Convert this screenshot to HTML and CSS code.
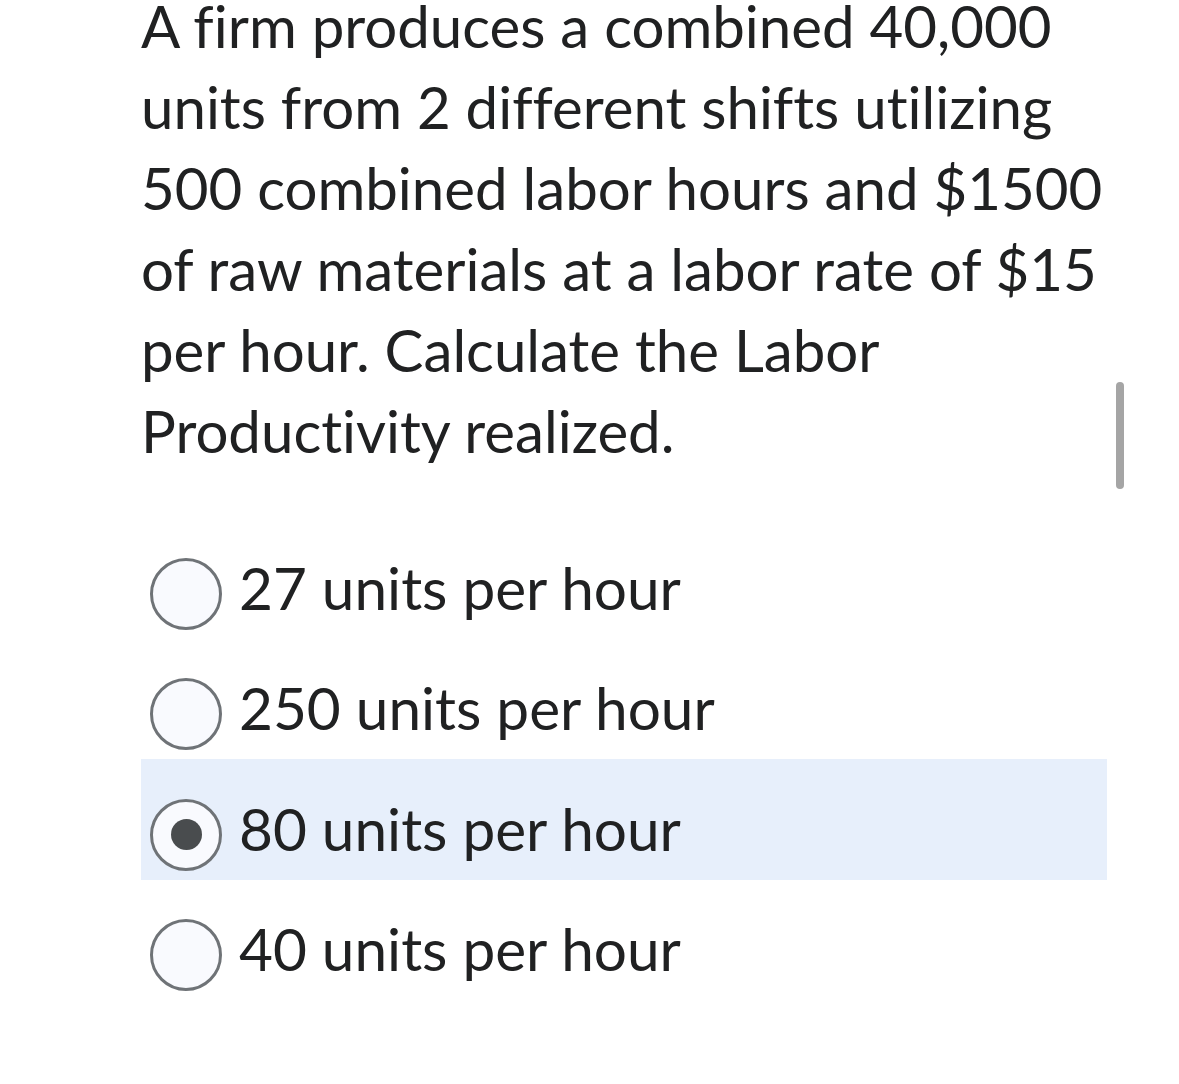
FILE: index.html
```html
<!DOCTYPE html>
<html>
<head>
<meta charset="utf-8">
<link rel="stylesheet" href="styles.css">
</head>
<body>
<div class="page">
  <p class="question">A firm produces a combined 40,000<br>units from 2 different shifts utilizing<br>500 combined labor hours and $1500<br>of raw materials at a labor rate of $15<br>per hour. Calculate the Labor<br>Productivity realized.</p>
  <div class="options">
    <div class="option"><span class="radio"></span><span class="label">27 units per hour</span></div>
    <div class="option"><span class="radio"></span><span class="label">250 units per hour</span></div>
    <div class="option selected"><span class="radio"><span class="dot"></span></span><span class="label">80 units per hour</span></div>
    <div class="option"><span class="radio"></span><span class="label">40 units per hour</span></div>
  </div>
</div>
<div class="scrollbar"></div>
</body>
</html>
```
FILE: styles.css
```css
html, body {
  margin: 0;
  padding: 0;
  background: #ffffff;
}
body {
  font-family: Lato, "Open Sans", sans-serif;
  color: #202122;
  overflow: hidden;
  height: 1084px;
  font-variant-ligatures: none;
  font-feature-settings: "liga" 0, "clig" 0;
}
.page {
  width: 966px;
  margin-left: 141px;
}
.question {
  margin: -15px 0 0 0;
  font-size: 58.2px;
  line-height: 81px;
  padding-left: 0;
  white-space: nowrap;
}
.options {
  margin-top: 48px;
  display: flex;
  flex-direction: column;
}
.option {
  display: flex;
  align-items: center;
  height: 120px;
  box-sizing: border-box;
  padding: 32px 0 16px 9px;
}
.option.selected {
  background: #e7effb;
  height: 121px;
}
.radio {
  width: 72px;
  height: 72px;
  box-sizing: border-box;
  border: 3px solid #6f7377;
  border-radius: 50%;
  background: #f9fafe;
  margin-top: 14px;
  flex: none;
  display: flex;
  align-items: center;
  justify-content: center;
}
.dot {
  width: 31px;
  height: 31px;
  border-radius: 50%;
  background: #494c4e;
}
.label {
  margin-left: 17px;
  font-size: 58.5px;
  line-height: 72px;
}
.scrollbar {
  position: absolute;
  left: 1116px;
  top: 382px;
  width: 8px;
  height: 107px;
  border-radius: 4px;
  background: #a5a5a5;
}
```
